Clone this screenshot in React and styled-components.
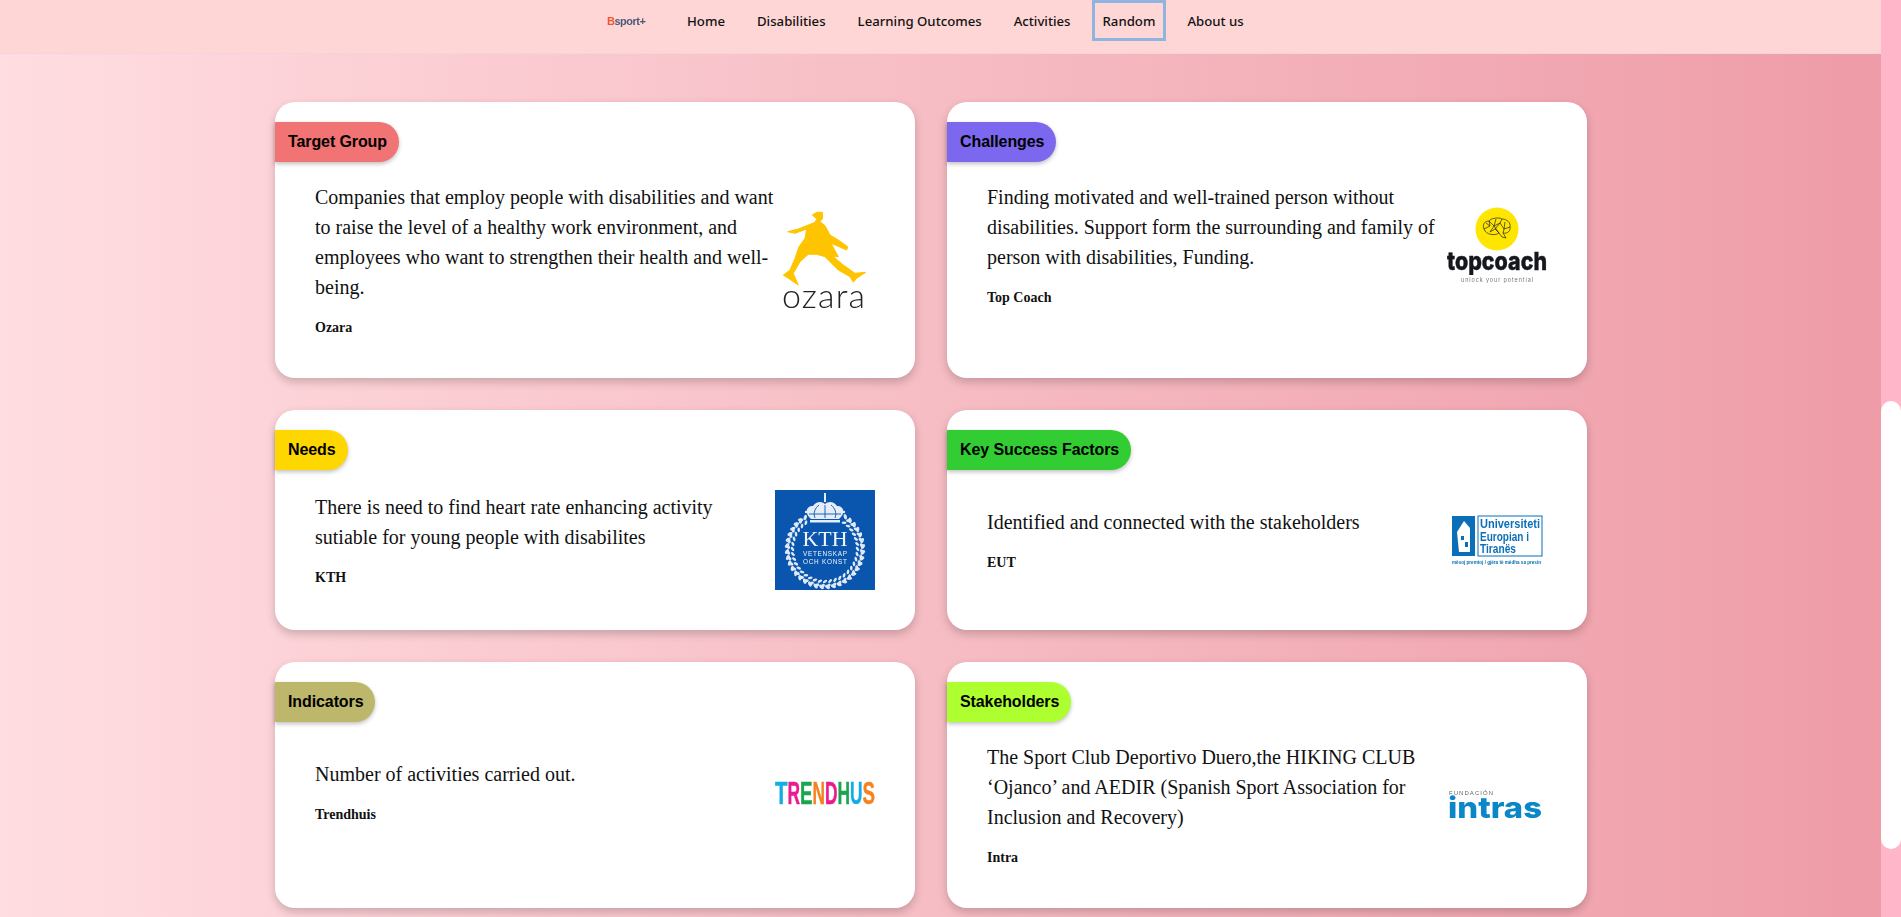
import React from 'react';
import styled, { createGlobalStyle } from 'styled-components';

const GlobalStyle = createGlobalStyle`
  html, body {
    margin: 0;
    height: 100%;
    overflow: hidden;
  }
  * {
    box-sizing: border-box;
  }
`;

const Page = styled.div`
  display: flex;
  width: 100vw;
  height: 100vh;
  overflow: hidden;
`;

const Main = styled.div`
  flex: 1;
  min-width: 0;
  display: flex;
  flex-direction: column;
  background: linear-gradient(to right, #ffdde1, #ee9ca7);
`;

const Scrollbar = styled.div`
  width: 20px;
  flex: none;
  padding-top: 401px;
  background: #ffb6c8;
`;

const ScrollThumb = styled.div`
  height: 448px;
  background: #fff;
  border-radius: 10px;
`;

const Navbar = styled.nav`
  height: 54px;
  flex: none;
  display: flex;
  align-items: flex-start;
  padding-left: 607px;
  background: #ffd6d6;
  border-bottom: 1px solid #f3d3dc;
`;

const Brand = styled.div`
  width: 64px;
  height: 41px;
  display: flex;
  align-items: center;
  font-family: "Liberation Sans", sans-serif;
  font-size: 11px;
  font-weight: 700;
  letter-spacing: -0.5px;
  color: #4c5878;
  filter: blur(0.5px);

  b {
    color: #f0562e;
  }
`;

const NavLink = styled.a`
  height: 41px;
  margin: 0 5px;
  padding: 0 8px;
  display: flex;
  align-items: center;
  border: 3px solid ${(p) => (p.$active ? '#8fb4e0' : 'transparent')};
  font-family: "Noto Sans", sans-serif;
  font-size: 13.2px;
  font-weight: 500;
  color: #111;
  white-space: nowrap;
`;

const Grid = styled.div`
  width: 1312px;
  margin: 48px 0 0 275px;
  display: grid;
  grid-template-columns: 640px 640px;
  gap: 32px;
`;

const Card = styled.section`
  display: flex;
  flex-direction: column;
  padding: 20px 0 40px;
  background: #fff;
  border-radius: 20px;
  box-shadow: 0 4px 10px rgba(0, 0, 0, 0.2);
`;

const Label = styled.div`
  align-self: flex-start;
  height: 40px;
  margin-bottom: 20px;
  padding: 0 12px 0 13px;
  display: flex;
  align-items: center;
  background: ${(p) => p.$color};
  border-radius: 0 20px 20px 0;
  box-shadow: 0 2px 4px rgba(0, 0, 0, 0.25);
  font-family: "Liberation Sans", sans-serif;
  font-size: 16px;
  font-weight: 700;
  letter-spacing: -0.1px;
  color: #000;
`;

const CardBody = styled.div`
  display: flex;
  align-items: center;
  padding: 0 40px;
`;

const Copy = styled.div`
  flex: 1;
  min-width: 0;
  font-family: "Liberation Serif", serif;
  color: #111;
`;

const Description = styled.p`
  margin: 0 0 16px;
  font-size: 20px;
  line-height: 30px;
`;

const Author = styled.div`
  font-size: 14px;
  font-weight: 700;
  line-height: 20px;
`;

const LogoBox = styled.svg`
  width: 100px;
  height: 100px;
  flex: none;
  display: block;
  filter: blur(0.3px);
`;

const OzaraLogo = () => (
  <LogoBox viewBox="0 0 100 100">
    <polygon
      fill="#ffc400"
      stroke="#ffc400"
      strokeWidth="1"
      strokeLinejoin="round"
      points="41.7,2.3 47.3,2.3 47.7,8.3 45,11.7 50,15.7 55,25 63.3,30 72.7,36.7 71.7,40 61.7,35.7 56,33.3 63.3,46.7 58.3,46.7 68.3,55 80,63.3 90.7,62.3 81.7,68.3 78.3,72.3 75,66.7 63.3,60 50,46.7 41.7,44.3 33.3,44.3 25,51.7 18.3,63.3 23.3,75 13.3,68.3 8.3,65 15,60 20,48.3 24,36.7 30,28.3 31.7,19 20,23.3 12.7,21.7 23.3,19 33.3,15 40,12.3 41.7,9 37.3,5"
    />
    <text
      x="7"
      y="98"
      fontFamily="Lato, sans-serif"
      fontSize="34"
      fontWeight="300"
      textLength="83"
      fill="#222"
    >
      ozara
    </text>
  </LogoBox>
);

const TopCoachLogo = () => (
  <LogoBox viewBox="0 0 100 100">
    <circle cx="50" cy="34" r="21.5" fill="#ffe600" />
    <g fill="none" stroke="#222" strokeWidth="0.7">
      <path d="M37 34 C35 29 38 26 42 26 C44 23 52 22 55 24 C60 24 64 28 63 32 C64 36 60 39 56 38 L59 43 L55 42 L52 38 C48 41 39 40 37 34 Z" />
      <path d="M42 26 L47 31 L43 37 M47 31 L53 28 L55 24 M53 28 L57 34 L63 32 M47 31 L52 38 M57 34 L56 38 M37 34 L43 31 L42 26 M49 24 L47 31 M43 37 L48 34 L52 38 M48 34 L53 28 M58 27 L57 34 M39 28 L43 31" />
    </g>
    <text
      x="0"
      y="75"
      fontFamily="Inter, sans-serif"
      fontSize="25"
      fontWeight="800"
      textLength="100"
      lengthAdjust="spacingAndGlyphs"
      fill="#15171c"
      stroke="#15171c"
      strokeWidth="0.4"
    >
      topcoach
    </text>
    <text
      x="14"
      y="87"
      fontFamily="Inter, sans-serif"
      fontSize="5.5"
      textLength="72"
      fill="#777"
    >
      unlock your potential
    </text>
  </LogoBox>
);

const wreath = Array.from({ length: 40 }, (_, i) => (i * 360) / 40).filter(
  (deg) => deg > 30 && deg < 330
);

const KthLogo = () => (
  <LogoBox viewBox="0 0 100 100">
    <rect width="100" height="100" fill="#0a55ad" />
    <g fill="#e4edf8">
      <path d="M36 29 C29 23 31 16 38 16 C41 11 47 11 50 14 C53 11 59 11 62 16 C69 16 71 23 64 29 Z" />
      <rect x="35" y="30" width="30" height="2.5" />
      <rect x="49" y="3" width="2" height="9" />
      <circle cx="31" cy="22" r="1.2" />
      <circle cx="69" cy="22" r="1.2" />
    </g>
    <g stroke="#0a55ad" strokeWidth="0.9" fill="none">
      <path d="M40 28 C38 23 40 18 44 15 M50 28 V15 M60 28 C62 23 60 18 56 15 M34 24 H66" />
    </g>
    {wreath.map((deg) => (
      <g key={deg} transform={`rotate(${deg} 50 59)`} fill="#dfe9f6">
        <ellipse cx="47.5" cy="21" rx="2.8" ry="1.6" transform="rotate(35 47.5 21)" />
        <ellipse cx="52.5" cy="22" rx="2.8" ry="1.6" transform="rotate(-35 52.5 22)" />
        <ellipse cx="50" cy="26.5" rx="2.4" ry="1.3" transform="rotate(-35 50 26.5)" />
      </g>
    ))}
    <text
      x="50"
      y="56"
      textAnchor="middle"
      fontFamily="'Liberation Serif', serif"
      fontSize="20"
      textLength="45"
      lengthAdjust="spacingAndGlyphs"
      fill="#f2f6fb"
    >
      KTH
    </text>
    <text
      x="50"
      y="65.5"
      textAnchor="middle"
      fontFamily="'Liberation Sans', sans-serif"
      fontSize="6.4"
      textLength="44"
      fill="#f2f6fb"
    >
      VETENSKAP
    </text>
    <text
      x="50"
      y="73.5"
      textAnchor="middle"
      fontFamily="'Liberation Sans', sans-serif"
      fontSize="6.4"
      textLength="44"
      fill="#f2f6fb"
    >
      OCH KONST
    </text>
  </LogoBox>
);

const EutLogo = () => (
  <LogoBox viewBox="0 0 100 100">
    <rect x="5" y="26" width="23" height="40" fill="#0b6fb8" />
    <path d="M10 42 L17 31 L23 38 L23 62 L12 62 Z" fill="#fff" />
    <rect x="14" y="46" width="3" height="4" fill="#0b6fb8" />
    <rect x="18" y="52" width="3" height="5" fill="#0b6fb8" />
    <rect x="31" y="26" width="64" height="40" fill="none" stroke="#0b6fb8" strokeWidth="1" />
    <g
      fontFamily="'Liberation Sans', sans-serif"
      fontSize="13"
      fontWeight="700"
      fill="#0b6fb8"
    >
      <text x="33" y="38" textLength="60" lengthAdjust="spacingAndGlyphs">
        Universiteti
      </text>
      <text x="33" y="50.5" textLength="49" lengthAdjust="spacingAndGlyphs">
        Europian i
      </text>
      <text x="33" y="63" textLength="36" lengthAdjust="spacingAndGlyphs">
        Tiranës
      </text>
    </g>
    <text
      x="5"
      y="74"
      fontFamily="'Liberation Sans', sans-serif"
      fontSize="5.5"
      fontWeight="700"
      textLength="89"
      lengthAdjust="spacingAndGlyphs"
      fill="#0b6fb8"
    >
      mësoj premtoj / gjëra të mëdha sa presin
    </text>
  </LogoBox>
);

const trendLetters = [
  ['T', '#12aee3'],
  ['R', '#ec1a8e'],
  ['E', '#19a64f'],
  ['N', '#f5821f'],
  ['D', '#ec1a8e'],
  ['H', '#19a64f'],
  ['U', '#12aee3'],
  ['S', '#f5821f'],
];

const TrendhuisLogo = () => (
  <LogoBox viewBox="0 0 100 100">
    {trendLetters.map(([letter, color], i) => (
      <text
        key={i}
        x={i * 12.5}
        y="62"
        fontFamily="'Liberation Sans', sans-serif"
        fontSize="32"
        fontWeight="700"
        textLength="12.5"
        lengthAdjust="spacingAndGlyphs"
        fill={color}
        stroke={color}
        strokeWidth="0.5"
      >
        {letter}
      </text>
    ))}
  </LogoBox>
);

const IntrasLogo = () => (
  <LogoBox viewBox="0 0 100 100">
    <text
      x="2"
      y="40"
      fontFamily="'Liberation Sans', sans-serif"
      fontSize="6"
      textLength="44"
      fill="#666"
    >
      FUNDACIÓN
    </text>
    <text
      x="1"
      y="63"
      fontFamily="Inter, sans-serif"
      fontSize="29"
      fontWeight="800"
      textLength="94"
      lengthAdjust="spacingAndGlyphs"
      fill="#0a87c9"
    >
      intras
    </text>
  </LogoBox>
);

const navItems = ['Home', 'Disabilities', 'Learning Outcomes', 'Activities', 'Random', 'About us'];

const cards = [
  {
    title: 'Target Group',
    color: '#f27373',
    text: 'Companies that employ people with disabilities and want to raise the level of a healthy work environment, and employees who want to strengthen their health and well-being.',
    author: 'Ozara',
    logo: <OzaraLogo />,
  },
  {
    title: 'Challenges',
    color: '#7b68ee',
    text: 'Finding motivated and well-trained person without disabilities. Support form the surrounding and family of person with disabilities, Funding.',
    author: 'Top Coach',
    logo: <TopCoachLogo />,
  },
  {
    title: 'Needs',
    color: '#ffd700',
    text: 'There is need to find heart rate enhancing activity sutiable for young people with disabilites',
    author: 'KTH',
    logo: <KthLogo />,
  },
  {
    title: 'Key Success Factors',
    color: '#32cd32',
    text: 'Identified and connected with the stakeholders',
    author: 'EUT',
    logo: <EutLogo />,
  },
  {
    title: 'Indicators',
    color: '#bdb76b',
    text: 'Number of activities carried out.',
    author: 'Trendhuis',
    logo: <TrendhuisLogo />,
  },
  {
    title: 'Stakeholders',
    color: '#adff2f',
    text: 'The Sport Club Deportivo Duero,the HIKING CLUB ‘Ojanco’ and AEDIR (Spanish Sport Association for Inclusion and Recovery)',
    author: 'Intra',
    logo: <IntrasLogo />,
  },
];

const App = () => (
  <Page>
    <GlobalStyle />
    <Main>
      <Navbar>
        <Brand>
          <span>
            <b>B</b>sport+
          </span>
        </Brand>
        {navItems.map((item) => (
          <NavLink key={item} $active={item === 'Random'}>
            {item}
          </NavLink>
        ))}
      </Navbar>
      <Grid>
        {cards.map((card) => (
          <Card key={card.title}>
            <Label $color={card.color}>{card.title}</Label>
            <CardBody>
              <Copy>
                <Description>{card.text}</Description>
                <Author>{card.author}</Author>
              </Copy>
              {card.logo}
            </CardBody>
          </Card>
        ))}
      </Grid>
    </Main>
    <Scrollbar>
      <ScrollThumb />
    </Scrollbar>
  </Page>
);

export default App;
